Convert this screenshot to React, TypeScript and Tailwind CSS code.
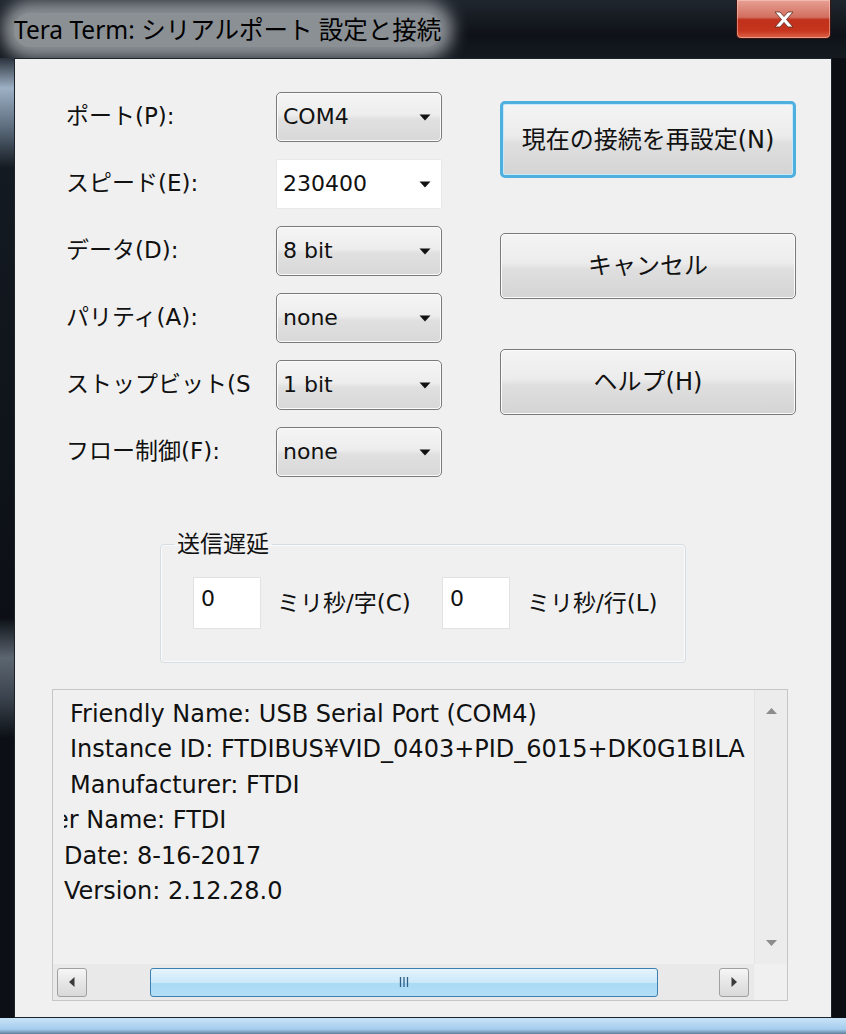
import clsx from 'clsx'

const UI = "font-['DejaVu_Sans','Noto_Sans_CJK_JP',sans-serif]"

const FIELDS = [
  { label: 'ポート(P):', value: 'COM4' },
  { label: 'スピード(E):', value: '230400', editable: true },
  { label: 'データ(D):', value: '8 bit' },
  { label: 'パリティ(A):', value: 'none' },
  { label: 'ストップビット(S):', value: '1 bit' },
  { label: 'フロー制御(F):', value: 'none' },
]

function Caret() {
  return (
    <svg width="12" height="7" viewBox="0 0 12 7">
      <path d="M0.5 0.5h11L6 6.5z" fill="#111" />
    </svg>
  )
}

function Combo({ value, editable }: { value: string; editable?: boolean }) {
  return (
    <div
      className={clsx(
        'flex h-[50px] w-[166px] items-center justify-between pl-[6px] pr-[10px] text-[22px]',
        editable
          ? 'rounded-[2px] border border-[#e8e8e8] bg-white'
          : 'rounded-[5px] border border-[#7a7a7a] bg-[linear-gradient(to_bottom,#f5f5f5,#ededed_45%,#e0e0e0_55%,#d8d8d8)] shadow-[inset_0_0_0_1px_#fbfbfb]',
      )}
    >
      <span className="text-[#111] pb-[2px]">{value}</span>
      <Caret />
    </div>
  )
}

function Button({ children, primary }: { children: React.ReactNode; primary?: boolean }) {
  return (
    <button
      className={clsx(
        'flex w-[296px] items-center justify-center text-[24px] text-[#111]',
        'bg-[linear-gradient(to_bottom,#f4f4f4,#ececec_45%,#dfdfdf_55%,#d4d4d4)]',
        primary
          ? 'h-[77px] rounded-[5px] border-[3px] border-[#4fb0e0] shadow-[inset_0_0_0_1px_#c8e9f9]'
          : 'h-[66px] rounded-[5px] border border-[#7a7a7a] shadow-[inset_0_0_0_1px_#fbfbfb]',
      )}
    >
      {children}
    </button>
  )
}

function ScrollBtn({ dir }: { dir: 'l' | 'r' }) {
  return (
    <div className="flex h-[29px] w-[30px] items-center justify-center rounded-[3px] border border-[#a0a0a0] bg-[linear-gradient(to_bottom,#f6f6f6,#e6e6e6_50%,#d9d9d9)]">
      <svg width="6" height="10" viewBox="0 0 6 10">
        {dir === 'l' ? <path d="M5.5 0v10L0 5z" fill="#3a3a3a" /> : <path d="M0.5 0v10L6 5z" fill="#3a3a3a" />}
      </svg>
    </div>
  )
}

export default function App() {
  return (
    <div className={clsx('flex h-[1034px] w-[846px] flex-col overflow-hidden bg-[#0d1117]', UI)}>
      {/* title bar */}
      <div className="flex h-[58px] shrink-0 items-start bg-[linear-gradient(to_bottom,#20262e,#0e1218_60%,#151a21)]">
        <div className="mt-[11px] ml-[14px] h-[38px] flex items-center">
          <span className="rounded-[16px] bg-[#8b9095] shadow-[0_0_16px_12px_#8b9095] text-[24.5px] leading-[34px] text-black font-['Noto_Sans','Noto_Sans_CJK_JP',sans-serif]">
            Tera Term: シリアルポート 設定と接続
          </span>
        </div>
        <div className="ml-auto mr-[15px] flex h-[39px] w-[95px] items-center justify-center rounded-b-[5px] border border-t-0 border-[#3d1510] bg-[linear-gradient(to_bottom,#e7a093,#d26f60_45%,#c0301b_52%,#c5341c_80%,#dd6447)] shadow-[inset_0_0_0_1px_rgba(255,220,210,0.45)]">
          <svg width="20" height="17" viewBox="0 0 20 17">
            <path
              d="M1 1h5l4 4.5L14 1h5l-6.5 7.5L19 16h-5l-4-4.5L6 16H1l6.5-7.5z"
              fill="#fff"
              stroke="#5a2a22"
              strokeWidth="0.8"
              strokeLinejoin="round"
            />
          </svg>
        </div>
      </div>

      {/* middle */}
      <div className="flex flex-1">
        <div className="w-[14px] bg-[linear-gradient(to_bottom,#2a323c,#9db0c4_30px,#5b6b7c_70px,#141a21_110px,#0c1016_560px,#5c6671_600px,#3a434d_640px,#0c1016_680px)]" />

        <div className="flex flex-1 flex-col border border-[#1d232b] bg-[#f0f0f0] text-[23px] text-[#111]">
          {/* top: fields + buttons */}
          <div className="mt-[33px] flex">
            <div className="ml-[51px] flex flex-col gap-[17px]">
              {FIELDS.map((f) => (
                <div key={f.label} className="flex items-center">
                  <div className="mr-[24px] w-[186px] overflow-hidden whitespace-nowrap pb-[2px]">{f.label}</div>
                  <Combo value={f.value} editable={f.editable} />
                </div>
              ))}
            </div>
            <div className="ml-[58px] flex flex-col pt-[9px]">
              <Button primary>現在の接続を再設定(N)</Button>
              <div className="mt-[55px]">
                <Button>キャンセル</Button>
              </div>
              <div className="mt-[50px]">
                <Button>ヘルプ(H)</Button>
              </div>
            </div>
          </div>

          {/* group box */}
          <fieldset className="mt-[52px] ml-[145px] w-[526px] rounded-[4px] border border-[#d5dde3] shadow-[inset_0_0_0_1px_#fafafa] pb-[33px]">
            <legend className="ml-[13px] px-[3px] leading-[30px]">送信遅延</legend>
            <div className="mt-[18px] flex items-center pl-[32px]">
              <div className="h-[52px] w-[68px] border border-[#e2e2e2] bg-white pl-[7px] pt-[8px] text-[22px] leading-[26px]">0</div>
              <span className="ml-[16px] w-[139px] whitespace-nowrap">ミリ秒/字(C)</span>
              <div className="ml-[26px] h-[52px] w-[68px] border border-[#e2e2e2] bg-white pl-[7px] pt-[8px] text-[22px] leading-[26px]">0</div>
              <span className="ml-[17px] whitespace-nowrap">ミリ秒/行(L)</span>
            </div>
          </fieldset>

          {/* info box */}
          <div className="mt-[26px] ml-[37px] flex h-[312px] w-[736px] flex-col border border-[#c6c6c6]">
            <div className="flex flex-1 min-h-0">
              <div className="flex-1 overflow-hidden pl-[11px] pt-[7px]">
                <div className="overflow-hidden whitespace-nowrap text-[24px] leading-[35.4px] text-[#111]">
                  <div className="pl-[6px]">Friendly Name: USB Serial Port (COM4)</div>
                  <div className="pl-[6px]">Instance ID: FTDIBUS¥VID_0403+PID_6015+DK0G1BILA</div>
                  <div className="pl-[6px]">Manufacturer: FTDI</div>
                  <div className="-ml-[10px]">er Name: FTDI</div>
                  <div>Date: 8-16-2017</div>
                  <div>Version: 2.12.28.0</div>
                </div>
              </div>
              <div className="flex w-[33px] flex-col items-center justify-between border-l border-[#e4e4e4] bg-[#ececec] py-[18px]">
                <svg width="11" height="6" viewBox="0 0 11 6">
                  <path d="M0 6h11L5.5 0z" fill="#8c8c8c" />
                </svg>
                <svg width="11" height="6" viewBox="0 0 11 6">
                  <path d="M0 0h11L5.5 6z" fill="#8c8c8c" />
                </svg>
              </div>
            </div>
            <div className="flex h-[36px] shrink-0">
              <div className="flex flex-1 items-center bg-[#e9e9e9] pl-[4px] pr-[5px]">
                <ScrollBtn dir="l" />
                <div className="flex flex-1 items-center">
                  <div className="ml-[63px] flex h-[29px] w-[508px] items-center justify-center rounded-[3px] border border-[#3c7fb1] bg-[linear-gradient(to_bottom,#e6f4fd,#cbe8fa_50%,#aadaf6_52%,#b3def7)]">
                    <svg width="10" height="12" viewBox="0 0 10 12">
                      <path d="M1.5 1v10M5 1v10M8.5 1v10" stroke="#2f5f86" strokeWidth="1.3" />
                    </svg>
                  </div>
                </div>
                <ScrollBtn dir="r" />
              </div>
              <div className="w-[33px] bg-[#f0f0f0]" />
            </div>
          </div>
        </div>

        <div className="w-[14px] bg-[#0b0f14]" />
      </div>

      {/* bottom frame */}
      <div className="h-[16px] shrink-0 bg-[linear-gradient(to_bottom,#c9e3f7,#a5cdee_70%,#5f7e9b)]" />
    </div>
  )
}
